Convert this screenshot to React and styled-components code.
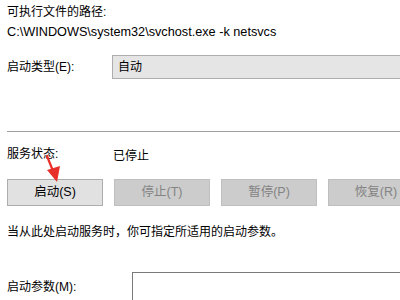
import React from "react";
import styled, { createGlobalStyle } from "styled-components";

const Global = createGlobalStyle`
  html, body { margin: 0; padding: 0; background: #fff; }
  body { font-family: "Liberation Sans", "Noto Sans CJK SC", sans-serif; font-size: 12px; color: #000; }
`;

const Page = styled.div`
  position: relative;
  width: 400px;
  height: 300px;
  overflow: hidden;
  padding-left: 7px;
  box-sizing: border-box;
  background: #fff;
`;

const Line = styled.div`
  height: 16px;
  line-height: 16px;
  margin-top: ${(p) => p.$mt}px;
  font-size: ${(p) => p.$fs || 12}px;
  white-space: nowrap;
`;

const Row = styled.div`
  display: flex;
  align-items: ${(p) => p.$align || "center"};
  margin-top: ${(p) => p.$mt}px;
  height: ${(p) => p.$h}px;
  white-space: nowrap;
`;

const Label = styled.div`
  flex: 0 0 ${(p) => p.$w}px;
  line-height: 16px;
  padding-top: ${(p) => p.$pt || 0}px;
`;

const Combo = styled.div`
  flex: 0 0 320px;
  height: 24px;
  box-sizing: border-box;
  background: #e5e5e5;
  border: 1px solid #adadad;
  padding-left: 5px;
  line-height: 22px;
`;

const Separator = styled.div`
  margin-top: 52px;
  height: 1px;
  background: #a0a0a0;
`;

const Buttons = styled.div`
  display: flex;
  gap: 11px;
  margin-top: 17px;
  height: 27px;
`;

const Button = styled.div`
  flex: 0 0 96px;
  box-sizing: border-box;
  height: 27px;
  line-height: 25px;
  font-size: 12.5px;
  text-align: center;
  border: 1px solid ${(p) => (p.$disabled ? "#bfbfbf" : "#adadad")};
  background: ${(p) => (p.$disabled ? "#cccccc" : "#e1e1e1")};
  color: ${(p) => (p.$disabled ? "#838383" : "#000")};
`;

const Input = styled.div`
  flex: 0 0 300px;
  height: 30px;
  box-sizing: border-box;
  border: 1px solid #7a7a7a;
  background: #fff;
`;

const Arrow = styled.svg`
  position: absolute;
  left: 40px;
  top: 150px;
  width: 24px;
  height: 36px;
`;

export default function App() {
  return (
    <>
      <Global />
      <Page>
        <Line $mt={4}>可执行文件的路径:</Line>
        <Line $mt={4} $fs={12.7}>C:\WINDOWS\system32\svchost.exe -k netsvcs</Line>
        <Row $mt={15} $h={24}>
          <Label $w={105}>启动类型(E):</Label>
          <Combo>自动</Combo>
        </Row>
        <Separator />
        <Row $mt={14} $h={16}>
          <Label $w={106}>服务状态:</Label>
          <span>已停止</span>
        </Row>
        <Buttons>
          <Button>启动(S)</Button>
          <Button $disabled>停止(T)</Button>
          <Button $disabled>暂停(P)</Button>
          <Button $disabled>恢复(R)</Button>
        </Buttons>
        <Line $mt={18}>当从此处启动服务时，你可指定所适用的启动参数。</Line>
        <Row $mt={32} $h={30} $align="flex-start">
          <Label $w={125} $pt={7}>启动参数(M):</Label>
          <Input />
        </Row>
        <Arrow viewBox="0 0 24 36">
          <line x1="7" y1="6" x2="13" y2="21" stroke="#e8302a" strokeWidth="2.2" strokeLinecap="round" />
          <polygon points="7,20 20,16 17,32" fill="#e8302a" />
        </Arrow>
      </Page>
    </>
  );
}
